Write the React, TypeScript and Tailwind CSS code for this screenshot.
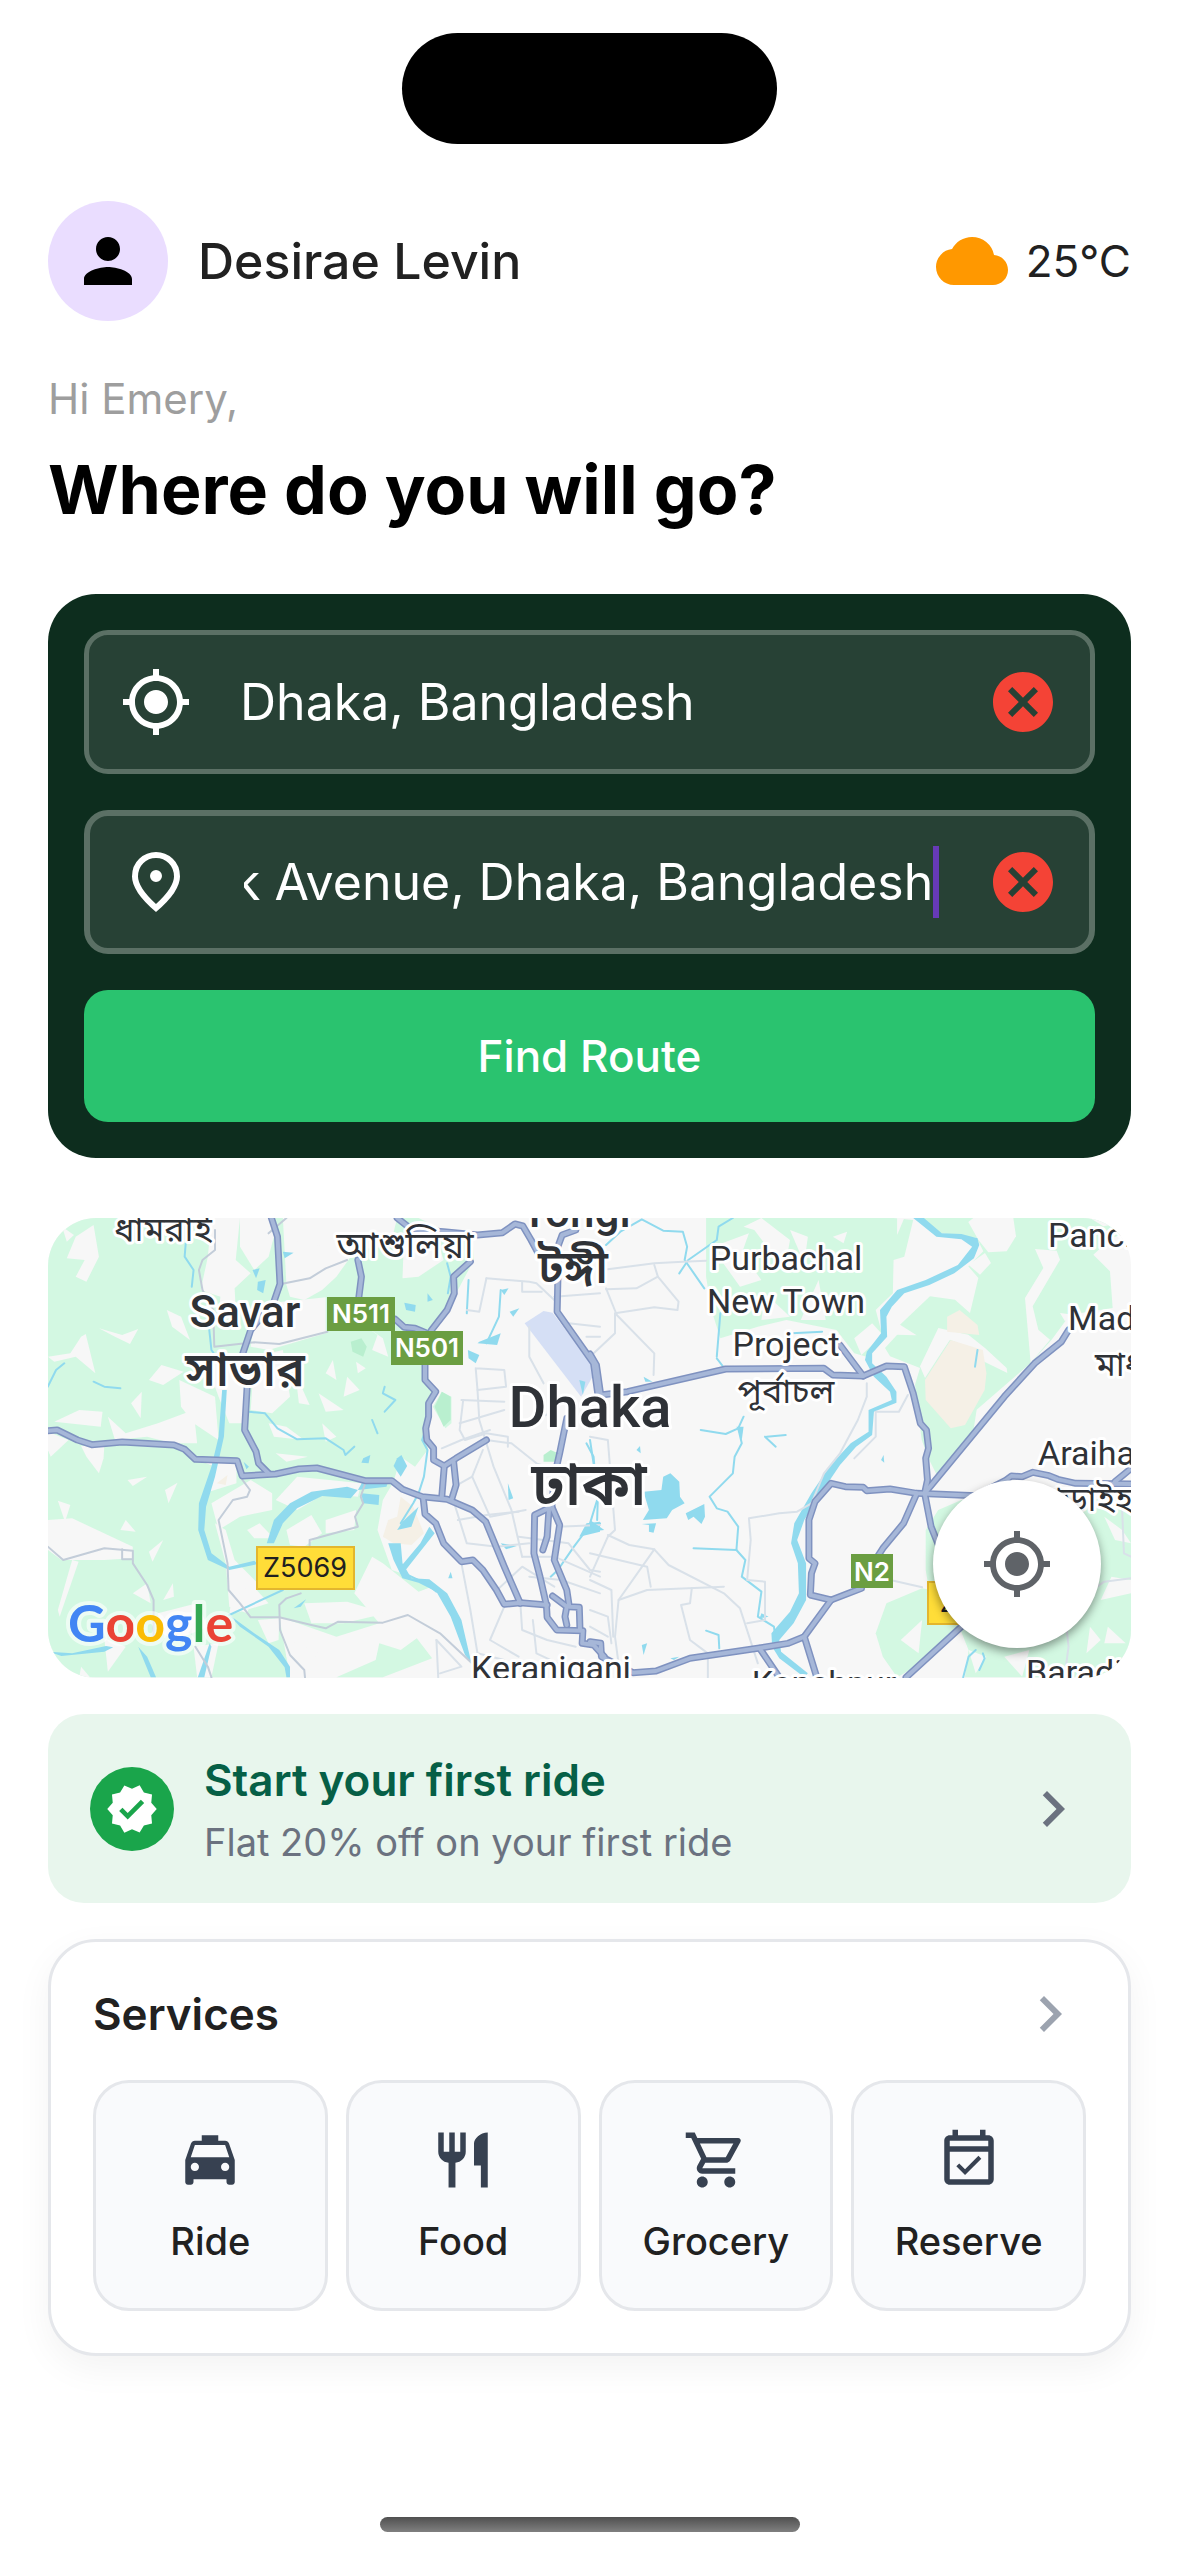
import { useLayoutEffect, useRef, useState } from "react";
import type { ReactNode } from "react";
import type { IconType } from "react-icons";
import {
  MdCancel,
  MdChevronRight,
  MdCloud,
  MdLocalTaxi,
  MdMyLocation,
  MdOutlineEventAvailable,
  MdOutlineShoppingCart,
  MdPerson,
  MdRestaurant,
  MdVerified,
} from "react-icons/md";

/* The map artwork is drawn as two sheets that share one scale. */
const WEST = "translate(-8 -8) scale(0.357143 0.333333)";
const EAST = "translate(542 -8) scale(0.357143 0.333333)";

const westGreen = [
  "22,24 1060,24 1130,60 1210,70 1215,150 1160,260 1092,380 1078,480 1105,545 1085,640 1085,720 1050,770 1010,740 990,815 960,870 945,960 985,1080 1110,1125 1060,1145 960,1060 930,1040 880,1150 950,1240 830,1280 670,1220 700,1402 22,1402",
  "830,1402 940,1350 950,1300 1010,1320 1055,1285 1098,1345 960,1402",
  "1125,545 1152,560 1152,640 1135,655 1100,590",
];

const westWhite = [
  "480,24 560,24 548,150 590,190 545,235 548,300 500,325 505,260 450,240 470,140",
  "560,24 640,24 655,80 640,140 600,180 560,110",
  "680,24 900,24 870,140 830,200 790,240 740,270 700,260 690,225",
  "720,95 810,24 1000,24 980,110 860,120",
  "640,280 800,262 800,370 640,420 590,410 600,330",
  "500,420 560,440 570,520 575,640 530,640 500,560 480,500",
  "600,440 680,420 700,560 650,610 590,600",
  "1020,60 1100,50 1130,150 1060,200 1015,205",
  "100,80 150,45 165,140 130,215 100,200 125,150 75,145",
  "62,50 95,75 75,95",
  "115,380 128,372 155,490 100,440 40,455 22,440 85,430",
  "165,355 230,375 275,357 252,402 210,380",
  "355,300 395,320 420,390 370,350",
  "305,510 340,465 402,485 345,525",
  "390,510 490,560 500,690 430,640 395,590",
  "255,580 285,545 282,625",
  "110,600 175,605 170,650 40,635",
  "190,620 240,670 330,640 430,600 440,700 370,700 300,680 210,690",
  "22,665 80,690 30,740 22,720",
  "400,720 450,755 550,755 550,820 460,850 490,770 420,740",
  "50,872 85,885 70,935",
  "115,708 180,708 178,745 165,790 130,740",
  "245,810 300,800 260,828",
  "350,840 385,818 360,880",
  "22,930 90,925 260,1010 258,1045 180,1050 60,1050 22,1020",
  "225,960 240,930 268,965",
  "305,1025 345,990 315,1055",
  "345,1170 372,1120 375,1160",
  "480,880 590,810 650,850 650,900 560,920 500,960",
  "490,940 520,1060 530,1190 580,1210 610,1120 545,1050 520,960",
  "580,960 615,940 655,985 600,985",
  "660,870 720,800 900,820 890,860 800,850 720,900",
  "690,960 760,915 790,970 740,1010 700,1005",
  "800,930 885,900 880,960 800,970",
  "885,455 912,475 890,490",
  "820,450 830,510 800,490",
  "860,500 895,540 850,560",
  "715,490 755,585 725,580",
  "780,550 850,600 800,605",
  "640,640 690,650 740,690 655,680",
  "660,730 750,740 690,755",
  "790,640 830,680 800,695",
  "900,340 945,375 930,420 975,440 960,385",
  "1000,420 1015,445 990,450",
  "590,1120 640,1180 530,1215 535,1175",
  "610,1230 670,1225 668,1290 640,1300",
  "330,1210 440,1180 470,1250 380,1290 340,1270",
  "180,1285 240,1310 190,1385",
  "90,1050 108,1055 55,1220 50,1200",
  "260,1150 300,1120 310,1180",
  "740,1180 860,1175 970,1210 850,1240 760,1240",
  "700,1290 780,1330 740,1370 690,1340",
  "430,1310 500,1300 480,1402 440,1402",
  "115,1370 140,1402 110,1402",
];

const westWater = [
  "510,540 523,540 515,680 490,800 465,890 460,960 480,1030 530,1070 600,1052 610,1062 530,1080 470,1050 443,960 445,880 480,770 500,680",
  "635,1000 655,930 700,880 760,845 860,830 890,840 870,865 790,858 720,895 680,940 655,1000",
  "905,812 975,815 970,830 890,840",
  "900,850 950,855 948,885 905,880",
  "1000,745 1012,735 1028,768 1010,800 990,768",
  "905,745 925,735 920,760 900,758",
  "1015,935 1060,890 1040,950 1000,960",
  "1090,950 1105,970 1020,1085 1010,1070 1065,1000",
  "975,1000 1010,1000 1015,1060 1040,1105 1090,1108 1140,1150 1180,1230 1208,1360 1190,1335 1150,1220 1110,1145 1060,1118 1015,1105 990,1050",
  "530,1215 600,1270 670,1320 700,1370 700,1402 690,1402 685,1372 640,1310 560,1250",
  "25,1325 90,1330 185,1308 205,1312 180,1325 60,1338",
  "275,1310 300,1340 325,1402 310,1402",
  "475,1300 480,1310 460,1402 442,1402",
  "1020,278 1052,285 1050,305 1025,300",
  "1198,420 1230,435 1220,460 1200,445",
  "595,180 615,175 605,205",
  "610,215 632,210 625,250 608,240",
  "680,125 710,128 685,145",
  "1290,240 1312,235 1300,255",
  "1315,305 1342,295 1325,320",
  "1230,395 1290,370 1280,405 1225,400",
  "1085,250 1100,270 1085,275",
  "1310,820 1325,865 1312,870",
  "1290,1000 1335,1008 1305,1018",
  "1150,1085 1155,1105 1143,1105",
  "1530,940 1568,935 1568,965 1510,980",
  "1510,510 1527,515 1520,555",
  "710,1195 745,1168 730,1190",
  "570,755 585,770 578,778",
];

const westStreams = [
  "408,100 405,140 430,180 425,230",
  "470,320 480,420 500,450",
  "585,605 630,610 665,655 720,688 800,685 850,720 855,735 880,710",
  "22,530 45,480 68,460",
  "150,515 180,530 225,535",
  "1140,160 1150,200 1142,250",
  "1200,210 1195,310",
  "1290,240 1285,320 1250,400",
  "965,530 960,550 995,570 965,605",
  "930,630 945,670",
  "1085,640 1070,690 1085,720 1075,800 1060,850 1045,880 1010,940",
  "1110,1145 1080,1120 1010,1085",
  "1568,940 1530,960 1495,1010 1450,1080 1430,1100",
  "1530,700 1550,740 1560,870 1540,940",
  "530,1215 680,1140",
];

const westMinor = [
  "490,60 490,120 455,150 445,180 455,240 485,300 488,410 600,397 670,402 805,365",
  "640,70 690,24",
  "675,222 755,205 800,175 860,150",
  "560,800 588,840 580,860 540,870 500,930 525,1060 528,1140 560,1180 590,1222 670,1222 760,1245 800,1255 835,1235 960,1238 1030,1215 1120,1270 1220,1370",
  "910,822 898,860 905,880 882,920 890,950 755,990 755,1010",
  "730,1150 690,1165 670,1185 672,1260 700,1335 740,1380 742,1402",
  "22,1010 65,1050 180,1015 260,1022 260,1060 300,1125 318,1170 318,1290",
  "230,1018 230,1048 256,1048",
  "435,1310 470,1370 480,1402",
];

const westStreets = [
  "1250,205 1370,215 1390,220 1440,270",
  "1250,205 1230,305 1195,300",
  "1350,215 1350,245 1405,245",
  "1220,475 1300,480 1305,530 1225,540 1220,475",
  "1225,540 1230,630 1270,770 1320,900 1350,1040",
  "1180,570 1300,575",
  "1175,640 1300,600",
  "1185,570 1175,660 1190,690 1250,670 1310,680 1310,710",
  "1125,715 1180,690 1260,660",
  "1370,350 1370,440 1410,520",
  "1250,690 1320,700 1390,760 1450,780",
  "1160,880 1195,1000 1280,1010 1370,1000",
  "1170,930 1250,915 1340,905",
  "1210,800 1260,920 1360,900",
  "1240,720 1210,800 1160,830",
  "1180,1060 1205,1200 1225,1330 1300,1350",
  "1350,1040 1440,1040 1568,1100",
  "1280,1140 1350,1070 1440,1130",
  "1345,1180 1350,1260 1420,1290 1500,1310",
  "1300,1190 1260,1290 1340,1340",
  "1340,980 1480,1000 1540,1080 1568,1085",
  "1370,1100 1460,1110 1568,1150",
  "1380,1230 1390,1330 1470,1370",
  "1450,950 1568,945",
  "1440,260 1568,250",
  "1500,24 1500,60 1450,90",
  "1450,600 1360,640",
  "1480,340 1568,350",
  "1530,380 1568,380",
  "1110,1290 1115,1402",
  "1110,1290 1180,1370 1120,1390",
];

const westRoads = [
  "22,662 48,660 105,690 145,704 230,696 375,705 405,718 435,748 552,752 566,798 660,792 725,777 775,774 910,812 985,812 1015,838 1070,860 1140,868 1210,900 1248,935 1300,1070 1345,1180",
  "648,24 665,80 672,222 655,275 590,360 568,430 580,530 573,660 605,725 612,760 640,790",
  "890,150 900,200 893,260",
  "1000,24 1040,58 1130,65 1225,75 1295,68 1330,42 1352,48 1375,90 1400,140",
  "1205,155 1158,200 1160,250 1140,300 1095,362 1078,465 1078,510 1108,545 1088,580 1088,620 1080,655 1083,690 1102,715 1102,750 1132,768 1125,860",
  "995,328 1020,352 1050,355 1080,368",
  "1250,690 1165,745 1132,768",
  "1158,755 1165,825 1152,870",
  "1073,865 1078,912 1108,940 1130,1000 1180,1055 1212,1050 1240,1080 1278,1140 1300,1183 1345,1178 1420,1185",
  "1500,60 1462,75 1450,110 1450,210 1448,305 1550,460 1563,560",
  "1475,625 1455,730 1440,800 1433,890 1385,915 1383,1030 1400,1100 1418,1185 1420,1222 1447,1260 1520,1262 1518,1300 1550,1305 1580,1340",
  "1433,890 1455,945 1440,1050 1475,1140 1482,1190 1510,1192 1512,1260",
  "1425,900 1420,980 1408,1020",
  "1435,1158 1475,1190 1470,1220 1475,1245",
];

const eastGreen = [
  "325,24 850,24 905,30 880,140 850,150 848,250 800,300 820,380 775,440 740,430 690,360 620,345 550,330 470,350 365,385 340,300 325,200",
  "940,960 975,900 1040,870 1110,860 1515,870 1515,1402 1050,1402 1060,1320 1030,1240 960,1210 940,1080",
  "830,1180 930,1135 1000,1150 1040,1250 960,1340 860,1402 820,1340 800,1270",
];

const eastWhite = [
  "370,100 445,70 425,130 480,210 420,230 360,140",
  "430,50 480,24 560,90 545,180 460,60",
  "560,60 610,80 600,160",
  "640,210 660,330 590,330",
  "680,80 720,65 710,100",
  "490,250 560,320 480,330",
  "860,24 880,24 860,75",
  "740,385 790,340 820,375 760,435",
  "1440,920 1490,960 1515,1000 1470,990",
  "1460,1100 1515,1110 1515,1150 1430,1170",
  "1400,1250 1430,1290 1390,1330",
  "1450,1250 1500,1300 1440,1300",
  "870,1290 930,1230 920,1330",
  "1160,1340 1230,1320 1210,1400",
  "1060,1320 1110,1340 1080,1390",
];

/* Fields of the north-east corner, on their own grid. */
const cornerGreen = [
  "180,0 813,0 813,40 755,60 700,110 750,160 758,270 630,290 575,365 512,435 350,575 340,640 235,780 205,720 185,665 165,500 180,450 90,415 75,390 130,330 120,320 210,235 285,245 330,285 355,180 325,145 370,100 350,60 240,45",
];
const cornerWhite = [
  "325,12 340,0 460,0 468,55 440,100 385,103 355,65",
  "325,140 375,105 393,135 360,170",
  "525,93 590,98 600,125 518,265 535,335 570,365 512,435 495,240 550,150",
  "235,330 325,350 375,390 440,450 442,465 370,430 355,400 270,365 240,410 195,480 180,445",
  "690,0 740,0 755,20 730,25",
  "600,285 640,290 615,310",
  "120,320 170,352 110,350 90,300",
];

const eastWater = [
  "905,24 935,24 985,70 1040,72 1085,85 1090,105 1075,145 1020,190 950,225 880,250 845,290 830,320 832,380 790,430 790,460 830,500 858,545 858,578 795,605 790,675 745,710 700,765 640,860 600,930 580,990 605,1060 605,1170 570,1240 530,1290 535,1325 610,1390 600,1402 530,1345 510,1310 508,1270 560,1205 585,1150 582,1060 563,1000 572,940 620,850 670,770 730,700 780,665 780,600 845,570 840,545 795,500 770,450 775,425 815,370 812,300 860,240 940,210 1030,165 1070,110 1040,88 970,80",
  "150,845 200,840 205,800 225,790 250,815 252,860 265,880 230,900 215,925 148,930 165,900",
  "268,910 320,882 322,920 312,942 290,920 275,930",
  "145,942 185,940 178,968 165,965 165,945",
  "0,930 40,960 0,965",
  "130,720 140,708 142,730",
  "150,500 175,515 155,515",
  "410,650 430,650 425,690",
  "815,750 822,735 824,758",
  "145,1305 160,1300 150,1335",
  "225,1345 250,1340 235,1350",
  "480,1210 500,1220 475,1225",
];

const eastStreams = [
  "45,105 85,65 145,28 205,62 260,65 272,110 265,150 320,235",
  "400,24 360,50 355,90 275,150 250,190",
  "365,310 355,440",
  "430,620 415,655 425,700 405,740 400,790 335,860 355,895 385,905 415,950 410,1020 290,1015",
  "310,660 380,672 415,655",
  "410,1020 435,1050 425,1100 480,1145 470,1220 515,1250 520,1290",
  "0,690 10,760 22,860 20,930",
  "325,1262 360,1275 362,1315",
  "490,680 520,710",
  "495,680 548,675",
  "1085,420 1078,470",
  "1045,1402 1060,1340 1080,1320",
  "1090,1380 1105,1345 1100,1330",
  "565,370 650,365",
  "355,445 380,480 400,475",
];

const eastStreets = [
  "50,178 180,160 260,155 325,152",
  "45,235 75,315 180,430 178,495",
  "0,440 70,370 70,310 180,292 245,300 248,275 190,200 180,165",
  "45,238 130,235 190,200",
  "775,520 775,560 750,630 700,730 655,790 620,880 580,905 530,910 445,925 450,990 440,1110 490,1115 490,1230 440,1240",
  "890,555 865,605 800,605 800,680 740,745",
  "0,680 50,690 70,960 50,980 0,1100",
  "50,975 110,1005 180,1018 220,1065 375,1150 420,1195 470,1360",
  "180,1018 80,1170 70,1280 85,1402",
  "375,1130 160,1140 80,1170",
  "285,1135 280,1180 255,1185 280,1290 330,1330 330,1402",
  "0,1030 160,1070 170,1130",
  "0,1110 60,1140 65,1280",
  "0,1200 50,1220 60,1300",
  "0,1250 50,1280",
  "850,1112 930,1132",
  "1490,900 1495,1030 1515,1040",
  "1515,1105 1440,1115 1420,1130",
  "1335,1260 1340,1310 1330,1390",
];

const eastRoads = [
  "0,432 18,465 30,555 105,545 380,477 655,475 680,495 765,498 830,468 880,470 905,550 925,640 942,660 948,715 940,745 945,810 937,850",
  "0,1295 30,1300 32,1340 120,1388 185,1383 280,1345 470,1315 555,1300 600,1280 675,1170 760,1135",
  "675,1170 617,1155 620,1090 630,1060 613,1045 613,930 630,875 675,820 715,830 765,832 775,842 840,837 915,850 1080,857",
  "937,850 1160,560 1245,460 1320,395 1340,360",
  "915,850 878,940 820,1015 805,1040",
  "937,850 955,950 985,1030",
  "1080,857 1165,810 1180,798 1210,800 1240,787 1285,797 1310,808 1360,820 1515,822",
  "1470,815 1510,780",
  "475,1315 530,1402",
  "600,1280 635,1402",
  "885,1402 1040,1250",
  "700,405 765,498",
];

function Areas({ items, fill }: { items: string[]; fill: string }) {
  return (
    <g fill={fill}>
      {items.map((p) => (
        <polygon key={p} points={p} />
      ))}
    </g>
  );
}

function Lines({ items, stroke, width }: { items: string[]; stroke: string; width: number }) {
  return (
    <g fill="none" stroke={stroke} strokeWidth={width} strokeLinejoin="round" strokeLinecap="round">
      {items.map((p) => (
        <polyline key={p} points={p} vectorEffect="non-scaling-stroke" />
      ))}
    </g>
  );
}

function Sheet({
  transform,
  green,
  white,
  water,
  streams,
  streets,
  minor,
  children,
}: {
  transform: string;
  green: string[];
  white: string[];
  water: string[];
  streams: string[];
  streets: string[];
  minor: string[];
  children?: ReactNode;
}) {
  return (
    <g transform={transform}>
      <Areas items={green} fill="#d3f8e2" />
      <Areas items={white} fill="#f7f7f7" />
      {children}
      <Areas items={water} fill="#90daee" />
      <Lines items={streams} stroke="#90daee" width={2} />
      <Lines items={streets} stroke="#d9e1e9" width={2} />
      <Lines items={minor} stroke="#c3cdd9" width={2} />
    </g>
  );
}

type Label = { text: string; x: number; y: number; size: number; weight?: number; start?: boolean };

const labels: Label[] = [
  { text: "ধামরাই", x: 115, y: 23, size: 34 },
  { text: "আশুলিয়া", x: 357, y: 40, size: 36 },
  { text: "Savar", x: 197, y: 109, size: 44, weight: 500 },
  { text: "সাভার", x: 197, y: 168, size: 48, weight: 600 },
  { text: "Tongi", x: 528, y: 9, size: 44, weight: 500 },
  { text: "টঙ্গী", x: 525, y: 65, size: 46, weight: 600 },
  { text: "Dhaka", x: 542, y: 209, size: 58, weight: 500 },
  { text: "ঢাকা", x: 541, y: 287, size: 60, weight: 600 },
  { text: "Purbachal", x: 738, y: 52, size: 34 },
  { text: "New Town", x: 738, y: 95, size: 34 },
  { text: "Project", x: 738, y: 138, size: 34 },
  { text: "পূর্বাচল", x: 738, y: 185, size: 34 },
  { text: "Panch", x: 1000, y: 29, size: 34, start: true },
  { text: "Madhabdi", x: 1020, y: 112, size: 34, start: true },
  { text: "মাধবদী", x: 1047, y: 158, size: 34, start: true },
  { text: "Araihazar", x: 990, y: 247, size: 34, start: true },
  { text: "আড়াইহাজার", x: 976, y: 293, size: 34, start: true },
  { text: "Baradi", x: 978, y: 466, size: 34, start: true },
  { text: "Keraniganj", x: 503, y: 462, size: 34 },
  { text: "Kanchpur", x: 776, y: 477, size: 34 },
];

function MapArt() {
  return (
    <svg
      className="block h-[460px] w-full"
      viewBox="0 0 1083 460"
      preserveAspectRatio="xMidYMid slice"
      role="img"
      aria-label="Map of Dhaka"
      fontFamily="Roboto, 'Noto Sans Bengali', 'Noto Sans', sans-serif"
    >
      <rect width="1083" height="460" fill="#f7f7f7" />
      <Sheet
        transform={WEST}
        green={westGreen}
        white={westWhite}
        water={westWater}
        streams={westStreams}
        streets={westStreets}
        minor={westMinor}
      >
        <polygon points="870,395 900,385 915,410 905,440 875,425" fill="#b9efcf" />
        <polygon points="1125,545 1150,560 1150,630 1130,650 1105,590" fill="#b9efcf" />
        <polygon points="1410,735 1430,720 1450,730 1445,755 1410,755" fill="#b9efcf" />
        <polygon points="1010,860 1045,890 1075,970 1040,1005 990,1000 960,980 975,930 1000,920" fill="#f5f0e6" />
        <polygon points="495,820 525,795 520,825" fill="#f5f0e6" />
        <polygon points="1357,340 1410,303 1435,308 1558,480 1515,560" fill="#d5dff5" />
      </Sheet>
      <Sheet
        transform={EAST}
        green={eastGreen}
        white={eastWhite}
        water={eastWater}
        streams={eastStreams}
        streets={eastStreets}
        minor={[]}
      >
        <g transform="matrix(0.9333 0 0 1 756 24)">
          <Areas items={cornerGreen} fill="#d3f8e2" />
          <Areas items={cornerWhite} fill="#f7f7f7" />
        </g>
        <polygon points="1010,390 1100,420 1110,490 1105,540 1050,645 1010,655 940,570 938,510" fill="#f5f0e6" />
        <polygon points="1000,320 1035,300 1085,345 1090,375 1000,365" fill="#f5f0e6" />
      </Sheet>
      <g transform={WEST}>
        <Lines items={westRoads} stroke="#7f92c0" width={7} />
      </g>
      <g transform={EAST}>
        <Lines items={eastRoads} stroke="#7f92c0" width={7} />
      </g>
      <g transform={WEST}>
        <Lines items={westRoads} stroke="#a6b7d8" width={4} />
      </g>
      <g transform={EAST}>
        <Lines items={eastRoads} stroke="#a6b7d8" width={4} />
      </g>

      {labels.map((l) => (
        <text
          key={l.text}
          x={l.x}
          y={l.y}
          fontSize={l.size}
          fontWeight={l.weight ?? 400}
          textAnchor={l.start ? "start" : "middle"}
          fill="#2f3237"
          stroke="#ffffff"
          strokeWidth={6}
          strokeLinejoin="round"
          paintOrder="stroke"
        >
          {l.text}
        </text>
      ))}

      <g fill="#6b9e42">
        <rect x="279" y="79" width="68" height="34" />
        <rect x="343" y="113" width="72" height="34" />
        <rect x="803" y="336" width="42" height="34" />
      </g>
      <g fill="#ffffff" fontFamily="Inter, sans-serif" fontSize="26" fontWeight="600" textAnchor="middle">
        <text x="313" y="105">N511</text>
        <text x="379" y="139">N501</text>
        <text x="824" y="363">N2</text>
      </g>
      <g fill="#ffdd38" stroke="#e3b62e" strokeWidth="2">
        <rect x="209" y="329" width="97" height="42" />
        <rect x="880" y="364" width="97" height="42" />
      </g>
      <g fill="#202020" fontFamily="Inter, sans-serif" fontSize="27" textAnchor="middle">
        <text x="257" y="359">Z5069</text>
        <text x="928" y="394">Z1061</text>
      </g>

      <text
        x="20"
        y="424"
        fontFamily="Lato, sans-serif"
        fontSize="52"
        fontWeight="700"
        stroke="#ffffff"
        strokeOpacity="0.6"
        strokeWidth="8"
        strokeLinejoin="round"
        paintOrder="stroke"
      >
        <tspan fill="#4285f4">G</tspan>
        <tspan fill="#ea4335">o</tspan>
        <tspan fill="#fbbc05">o</tspan>
        <tspan fill="#4285f4">g</tspan>
        <tspan fill="#34a853">l</tspan>
        <tspan fill="#ea4335">e</tspan>
      </text>
    </svg>
  );
}

function PinIcon() {
  return (
    <svg viewBox="0 -960 960 960" className="size-[72px]" fill="currentColor" role="img" aria-label="Destination">
      <path d="M480-480q33 0 56.500-23.500T560-560q0-33-23.500-56.500T480-640q-33 0-56.500 23.500T400-560q0 33 23.500 56.500T480-480Zm0 294q122-112 181-203.500T720-552q0-109-69.500-178.500T480-800q-101 0-170.500 69.500T240-552q0 71 59 162.500T480-186Zm0 106Q319-217 239.500-334.500T160-552q0-150 96.500-239T480-880q127 0 223.500 89T800-552q0 100-79.500 217.500T480-80Z" />
    </svg>
  );
}

function PickupField() {
  const [value, setValue] = useState("Dhaka, Bangladesh");
  return (
    <div className="flex h-36 items-center rounded-3xl border-5 border-[#5b7065] bg-[#274135] pr-[31px] pl-[31px]">
      <label htmlFor="pickup" className="mr-12 text-white">
        <MdMyLocation className="size-[72px]" title="Pickup" />
      </label>
      <input
        id="pickup"
        value={value}
        onChange={(e) => setValue(e.target.value)}
        className="h-18 min-w-0 flex-1 bg-transparent text-[50px] text-white outline-none"
      />
      <button type="button" aria-label="Clear pickup" onClick={() => setValue("")} className="ml-12 text-[#f44336]">
        <MdCancel className="size-[72px]" />
      </button>
    </div>
  );
}

function DestinationField() {
  const [value, setValue] = useState("k Avenue, Dhaka, Bangladesh");
  const ref = useRef<HTMLInputElement>(null);
  useLayoutEffect(() => {
    const toEnd = () => {
      if (ref.current) ref.current.scrollLeft = ref.current.scrollWidth;
    };
    toEnd();
    document.fonts?.ready.then(toEnd);
  }, [value]);
  return (
    <div className="flex h-36 items-center rounded-3xl border-6 border-[#5b7065] bg-[#274135] pr-[30px] pl-[30px]">
      <label htmlFor="destination" className="mr-13 text-white">
        <PinIcon />
      </label>
      <input
        id="destination"
        ref={ref}
        value={value}
        onChange={(e) => setValue(e.target.value)}
        className="h-18 min-w-0 flex-1 bg-transparent text-[50px] text-white caret-transparent outline-none"
      />
      <span className="h-18 w-1.5 shrink-0 bg-[#673ab7]" aria-hidden />
      <button type="button" aria-label="Clear destination" onClick={() => setValue("")} className="ml-12 text-[#f44336]">
        <MdCancel className="size-[72px]" />
      </button>
    </div>
  );
}

const services: { name: string; Icon: IconType }[] = [
  { name: "Ride", Icon: MdLocalTaxi },
  { name: "Food", Icon: MdRestaurant },
  { name: "Grocery", Icon: MdOutlineShoppingCart },
  { name: "Reserve", Icon: MdOutlineEventAvailable },
];

export default function App() {
  return (
    <div className="flex min-h-screen flex-col bg-white px-12 font-['Inter',sans-serif] text-[#212121]">
      <div className="mx-auto mt-[33px] h-[111px] w-[375px] rounded-full bg-black" />

      <header className="mt-[57px] flex items-center justify-between">
        <div className="flex items-center gap-[30px]">
          <div className="flex size-[120px] items-center justify-center rounded-full bg-[#eaddff] text-black">
            <MdPerson className="size-[72px]" aria-hidden />
          </div>
          <p className="text-[50px] leading-[60px] font-medium">Desirae Levin</p>
        </div>
        <div className="flex items-center gap-[18px]">
          <MdCloud className="size-[72px] text-[#ff9800]" aria-hidden />
          <span className="text-[44px] leading-[60px]">25°C</span>
        </div>
      </header>

      <main>
        <p className="mt-12 text-[42px] leading-[60px] text-[#9e9e9e]">Hi Emery,</p>
        <h1 className="mt-[18px] text-[68px] leading-[84px] font-bold text-black">Where do you will go?</h1>

        <form
          className="mt-[63px] flex flex-col gap-9 rounded-[48px] bg-[#0d2d1e] p-9"
          onSubmit={(e) => e.preventDefault()}
        >
          <PickupField />
          <DestinationField />
          <button type="submit" className="h-[132px] rounded-3xl bg-[#2ac36f] text-[44px] font-medium text-white">
            Find Route
          </button>
        </form>

        <section className="relative mt-15 overflow-hidden rounded-[48px]">
          <MapArt />
          <button
            type="button"
            aria-label="Center map on my location"
            className="absolute right-[30px] bottom-[30px] flex size-[168px] items-center justify-center rounded-full bg-white text-[#5f6368] shadow-[0_4px_10px_rgba(0,0,0,0.4)]"
          >
            <MdMyLocation className="size-[72px]" />
          </button>
        </section>

        <a href="#offer" className="mt-9 flex h-[189px] items-center rounded-[36px] bg-[#e8f6ed] px-[42px]">
          <span className="flex size-[84px] items-center justify-center rounded-full bg-[#1aa54b] text-white">
            <MdVerified className="size-[54px]" aria-hidden />
          </span>
          <span className="ml-[30px] flex flex-1 flex-col gap-2 pt-1">
            <span className="text-[44px] leading-[54px] font-semibold text-[#065f46]">Start your first ride</span>
            <span className="text-[38px] leading-[54px] text-[#6b7280]">Flat 20% off on your first ride</span>
          </span>
          <MdChevronRight className="size-[72px] text-[#6b7280]" aria-hidden />
        </a>

        <section className="mt-9 rounded-[48px] border-3 border-[#e5e7eb] bg-white px-[42px] py-[42px] shadow-[0_12px_36px_rgba(0,0,0,0.05)]">
          <div className="flex h-[60px] items-center justify-between">
            <h2 className="text-[44px] leading-[54px] font-semibold">Services</h2>
            <button type="button" aria-label="All services" className="text-[#9ca3af]">
              <MdChevronRight className="size-[72px]" />
            </button>
          </div>
          <div className="mt-9 grid grid-cols-4 gap-[18px]">
            {services.map(({ name, Icon }) => (
              <button
                key={name}
                type="button"
                className="flex h-[231px] flex-col items-center justify-center gap-6 rounded-[36px] border-3 border-[#e5e7eb] bg-[#f9fafc]"
              >
                <Icon className="size-[66px] text-[#374151]" aria-hidden />
                <span className="text-[38px] leading-[48px] font-medium">{name}</span>
              </button>
            ))}
          </div>
        </section>
      </main>

      <div className="mx-auto mt-auto mb-6 h-[15px] w-[420px] rounded-full bg-linear-to-b from-[#505050] to-[#808080]" />
    </div>
  );
}
